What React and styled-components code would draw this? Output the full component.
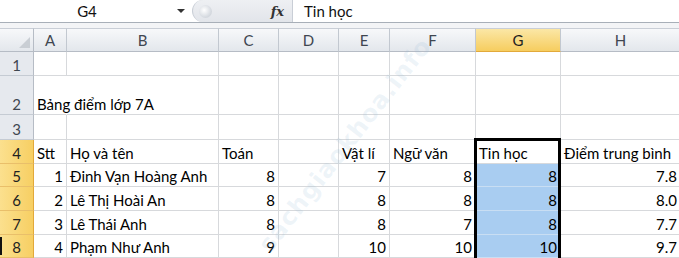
import React from 'react';
import styled, { createGlobalStyle } from 'styled-components';

const Global = createGlobalStyle`
  html, body { margin: 0; padding: 0; background: #fff; overflow: hidden; }
  body { font-family: Lato, "Noto Sans", sans-serif; }
`;

const Page = styled.div`
  position: relative;
  width: 679px;
  height: 258px;
  overflow: hidden;
  background: #fff;
`;

const FormulaBar = styled.div`
  display: flex;
  align-items: stretch;
  height: 22px;
  border-bottom: 1px solid #a8afb8;
  background: #fff;
`;

const NameBox = styled.div`
  width: 170px;
  display: flex;
  align-items: center;
  justify-content: center;
  font-size: 15px;
  color: #111;
  padding-left: 4px;
  box-sizing: border-box;
`;

const DropArrow = styled.div`
  width: 22px;
  display: flex;
  align-items: center;
  justify-content: center;
  &::before {
    content: '';
    border-left: 4px solid transparent;
    border-right: 4px solid transparent;
    border-top: 4px solid #333;
  }
`;

const Splitter = styled.div`
  width: 100px;
  display: flex;
  align-items: center;
  justify-content: space-between;
  background: linear-gradient(#eef0f3, #e2e5ea);
  border-radius: 12px 0 0 12px;
  border-left: 1px solid #c9ced6;
  padding: 0 8px 0 6px;
  box-sizing: border-box;
`;

const Grip = styled.div`
  width: 13px;
  height: 13px;
  border-radius: 50%;
  background: radial-gradient(circle at 40% 40%, #fff 0%, #d8dce2 60%, #c4c9d0 100%);
`;

const Fx = styled.span`
  font-family: "DejaVu Serif", "Liberation Serif", serif;
  font-style: italic;
  font-weight: bold;
  font-size: 13px;
  color: #333;
`;

const FormulaText = styled.div`
  flex: 1;
  display: flex;
  align-items: center;
  padding-left: 11px;
  border-left: 1px solid #c9ced6;
  font-size: 15px;
  color: #111;
`;

const Spacer = styled.div`
  height: 5px;
  background: #f3f4f6;
`;

const Sheet = styled.div`
  display: grid;
  grid-template-columns: 34px 33px 152px 60px 60px 51px 86px 85px 120px;
  grid-template-rows: 24px 24px 39px 25px 24px 23px 24px 24px 23px;
  width: 681px;
  font-size: 15px;
  color: #000;
`;

const Corner = styled.div`
  position: relative;
  background: linear-gradient(#f7f8fa, #e3e7ec);
  border-right: 1px solid #b6bcc5;
  border-bottom: 1px solid #b6bcc5;
  border-top: 1px solid #c9ced6;
  &::after {
    content: '';
    position: absolute;
    right: 3px;
    bottom: 3px;
    border-left: 11px solid transparent;
    border-bottom: 11px solid #c9ced4;
  }
`;

const ColHeader = styled.div`
  display: flex;
  align-items: center;
  justify-content: center;
  color: ${p => (p.$sel ? '#222' : '#3f4650')};
  background: ${p =>
    p.$sel ? 'linear-gradient(#fbe7a6, #f6cd5f)' : 'linear-gradient(#f7f8fa, #e3e7ec)'};
  border-right: 1px solid #c2c8d0;
  border-bottom: 1px solid ${p => (p.$sel ? '#e2a93a' : '#b6bcc5')};
  border-top: 1px solid #c9ced6;
`;

const RowHeader = styled.div`
  display: flex;
  align-items: flex-end;
  justify-content: center;
  padding-bottom: 1px;
  box-sizing: border-box;
  color: ${p => (p.$sel ? '#222' : '#3f4650')};
  background: ${p =>
    p.$sel ? 'linear-gradient(90deg, #fbe08e, #f7cf63)' : '#e6e9ee'};
  border-right: 1px solid ${p => (p.$sel ? '#e2a93a' : '#b6bcc5')};
  border-bottom: 1px solid ${p => (p.$sel ? '#e9bf6a' : '#c5cbd3')};
`;

const Cell = styled.div`
  display: flex;
  align-items: flex-end;
  justify-content: ${p => (p.$right ? 'flex-end' : 'flex-start')};
  padding: 0 3px 1px 3px;
  box-sizing: border-box;
  white-space: nowrap;
  overflow: visible;
  min-width: 0;
  background: ${p => (p.$fill ? '#a9cdf1' : 'transparent')};
  border-right: 1px solid ${p => (p.$noRight ? 'transparent' : p.$fill ? '#a9cdf1' : '#d7d9dc')};
  border-bottom: 1px solid ${p => (p.$fill ? '#c9def3' : '#d7d9dc')};
`;

const Selection = styled.div`
  position: absolute;
  left: 474px;
  top: 138px;
  width: 87px;
  height: 130px;
  border: 3px solid #000;
  box-sizing: border-box;
  pointer-events: none;
`;

const EdgeMark = styled.div`
  position: absolute;
  left: 0;
  top: 237px;
  width: 2px;
  height: 18px;
  background: #111;
`;

const Watermark = styled.div`
  position: absolute;
  left: 345px;
  top: 145px;
  transform: translate(-50%, -50%) rotate(-52deg);
  font-family: "DejaVu Sans", sans-serif;
  font-weight: bold;
  font-size: 24px;
  letter-spacing: 1px;
  color: rgba(150, 185, 215, 0.16);
  white-space: nowrap;
  pointer-events: none;
`;

const cols = ['A', 'B', 'C', 'D', 'E', 'F', 'G', 'H'];

const rows = [
  { n: 1, cells: [] },
  { n: 2, cells: [{ c: 0, t: 'Bảng điểm lớp 7A', noRight: true }] },
  { n: 3, cells: [] },
  {
    n: 4,
    sel: true,
    cells: [
      { c: 0, t: 'Stt' },
      { c: 1, t: 'Họ và tên' },
      { c: 2, t: 'Toán' },
      { c: 4, t: 'Vật lí' },
      { c: 5, t: 'Ngữ văn' },
      { c: 6, t: 'Tin học' },
      { c: 7, t: 'Điểm trung bình' },
    ],
  },
];

const data = [
  [1, 'Đinh Vạn Hoàng Anh', 8, 7, 8, 8, '7.8'],
  [2, 'Lê Thị Hoài An', 8, 8, 8, 8, '8.0'],
  [3, 'Lê Thái Anh', 8, 8, 7, 8, '7.7'],
  [4, 'Phạm Như Anh', 9, 10, 10, 10, '9.7'],
];

data.forEach((d, i) => {
  rows.push({
    n: 5 + i,
    sel: true,
    cells: [
      { c: 0, t: d[0], right: true },
      { c: 1, t: d[1] },
      { c: 2, t: d[2], right: true },
      { c: 4, t: d[3], right: true },
      { c: 5, t: d[4], right: true },
      { c: 6, t: d[5], right: true, fill: true },
      { c: 7, t: d[6], right: true },
    ],
  });
});

export default function App() {
  return (
    <Page>
      <Global />
      <FormulaBar>
        <NameBox>G4</NameBox>
        <DropArrow />
        <Splitter>
          <Grip />
          <Fx>fx</Fx>
        </Splitter>
        <FormulaText>Tin học</FormulaText>
      </FormulaBar>
      <Spacer />
      <Sheet>
        <Corner />
        {cols.map(c => (
          <ColHeader key={c} $sel={c === 'G'}>
            {c}
          </ColHeader>
        ))}
        {rows.map(r => (
          <React.Fragment key={r.n}>
            <RowHeader $sel={r.sel}>{r.n}</RowHeader>
            {cols.map((_, ci) => {
              const cell = r.cells.find(x => x.c === ci);
              return (
                <Cell
                  key={ci}
                  $right={cell && cell.right}
                  $fill={cell && cell.fill}
                  $noRight={cell && cell.noRight}
                >
                  {cell ? cell.t : ''}
                </Cell>
              );
            })}
          </React.Fragment>
        ))}
      </Sheet>
      <Selection />
      <EdgeMark />
      <Watermark>sachgiaokhoa.info</Watermark>
    </Page>
  );
}
